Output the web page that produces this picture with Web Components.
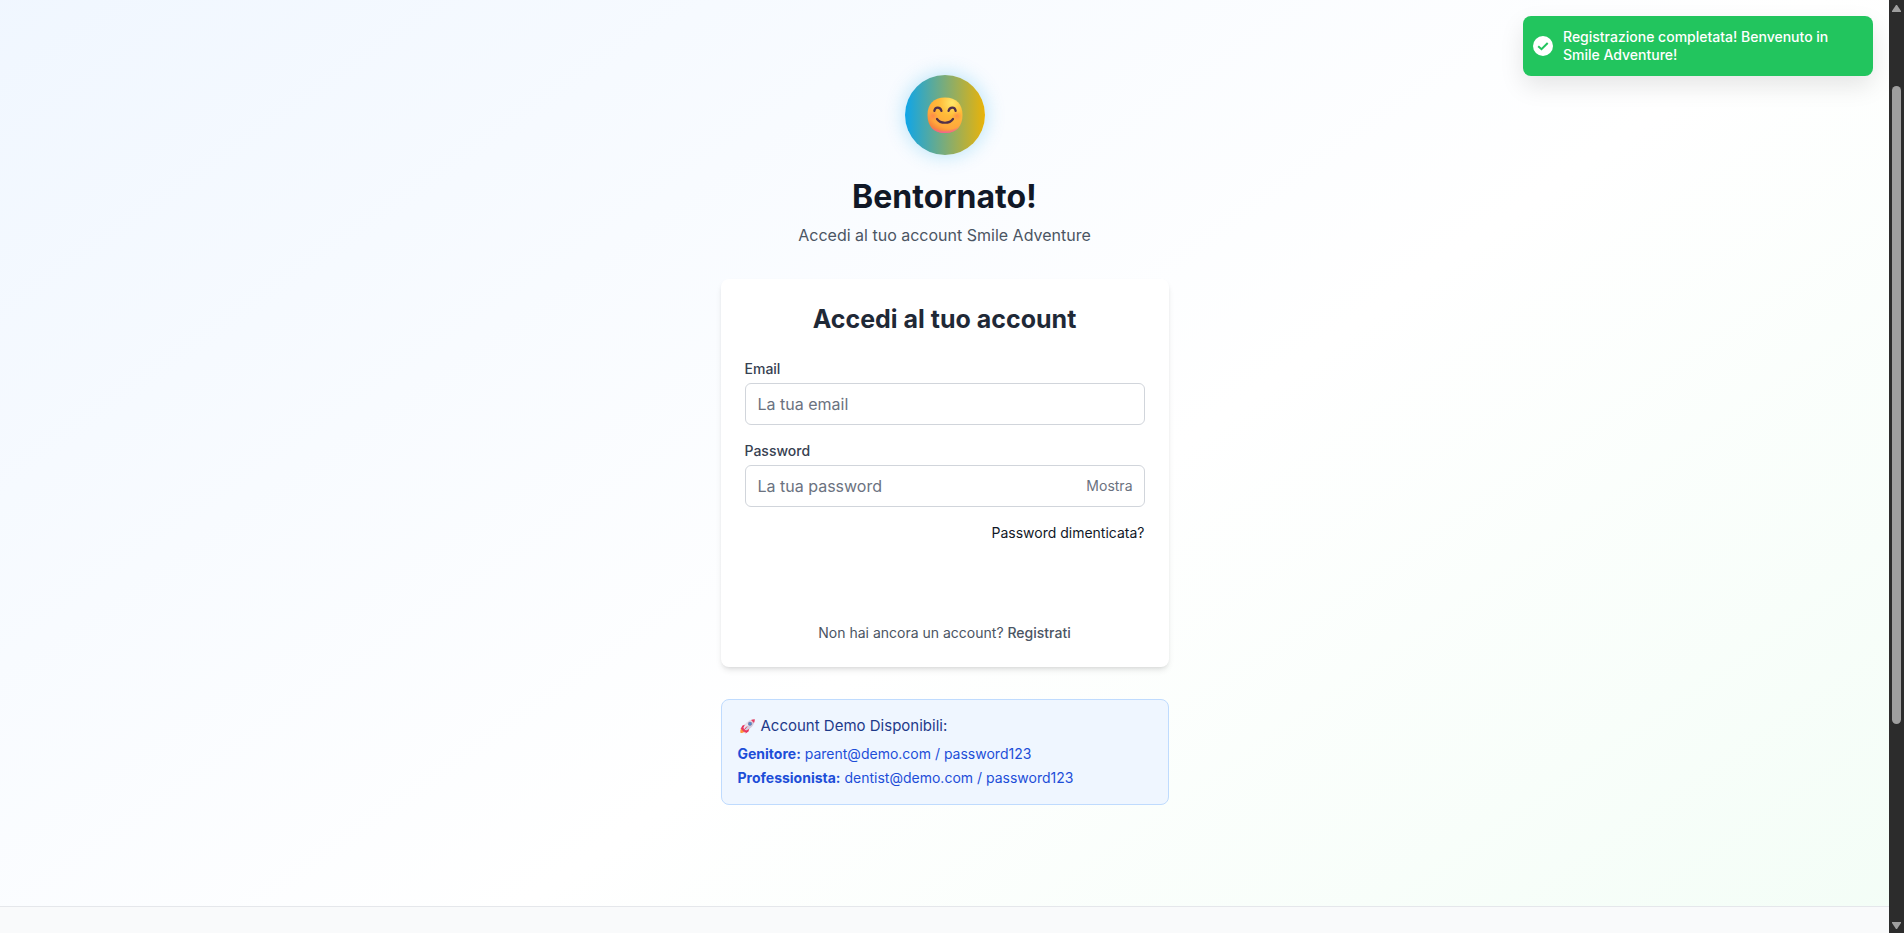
<!DOCTYPE html>
<html lang="it">
<head>
<meta charset="utf-8">
<meta name="viewport" content="width=device-width, initial-scale=1">
<title>Smile Adventure - Accedi</title>
<style>
body { margin: 0; font-family: Inter, "Liberation Sans", sans-serif; color: #111827; }
</style>
</head>
<body>
<smile-app></smile-app>

<template id="t-app">
<style>
:host { display: grid; grid-template-columns: 1fr 15px; min-height: 100vh; }
.page { position: relative; display: flex; flex-direction: column; min-width: 0; }
main {
  display: flex; flex-direction: column; align-items: center;
  padding: 75px 16px 101px;
  background: linear-gradient(to bottom right, #eff6ff, #ffffff 52%, #f0fdf4) 0 -102px / 100% calc(100% + 412px) no-repeat;
}
.column { width: 100%; max-width: 448px; display: flex; flex-direction: column; gap: 32px; }
footer { flex: 1; background: #f9fafb; border-top: 1px solid #e5e7eb; }
toast-message { position: absolute; top: 16px; right: 16px; }
</style>
<div class="page">
  <main>
    <div class="column">
      <welcome-header>
        <span slot="title">Bentornato!</span>
        <span slot="subtitle">Accedi al tuo account Smile Adventure</span>
      </welcome-header>
      <login-card></login-card>
      <demo-accounts></demo-accounts>
    </div>
  </main>
  <footer></footer>
  <toast-message>Registrazione completata! Benvenuto in Smile Adventure!</toast-message>
</div>
<scroll-rail></scroll-rail>
</template>

<template id="t-header">
<style>
:host { display: flex; flex-direction: column; align-items: center; text-align: center; }
.logo {
  width: 80px; height: 80px; border-radius: 50%; margin-bottom: 24px;
  display: flex; align-items: center; justify-content: center;
  background: linear-gradient(to right, #0ea5e9, #eab308);
  box-shadow: 0 0 20px rgba(14, 165, 233, .3);
}
svg { width: 36px; height: 36px; display: block; }
h1 { margin: 0 0 8px; font-size: 32px; line-height: 36px; font-weight: 700; color: #111827; }
p { margin: 0; font-size: 16px; line-height: 24px; color: #4b5563; }
</style>
<div class="logo">
  <svg viewBox="0 0 36 36" role="img" aria-label="Sorriso">
    <defs>
      <radialGradient id="face" cx="25" cy="6" r="32" gradientUnits="userSpaceOnUse">
        <stop offset="0" stop-color="#ffe768"/><stop offset=".4" stop-color="#ffbb38"/><stop offset=".8" stop-color="#ffa63c"/><stop offset="1" stop-color="#f47c3c"/>
      </radialGradient>
      <radialGradient id="base" cx="18" cy="6" r="30" gradientUnits="userSpaceOnUse">
        <stop offset=".9" stop-color="#f4649a" stop-opacity="0"/><stop offset="1" stop-color="#f0609f"/>
      </radialGradient>
      <radialGradient id="cheek"><stop offset="0" stop-color="#ff6a58" stop-opacity=".5"/><stop offset="1" stop-color="#ff6a58" stop-opacity="0"/></radialGradient>
    </defs>
    <path d="M18 .5C29.500 .5 35.500 7 35.500 18S29.500 36 18 36 .5 29 .5 18 6.500 .5 18 .5Z" fill="url(#face)"/>
    <path d="M18 .5C29.500 .5 35.500 7 35.500 18S29.500 36 18 36 .5 29 .5 18 6.500 .5 18 .5Z" fill="url(#base)"/>
    <circle cx="6" cy="19" r="5" fill="url(#cheek)"/><circle cx="30" cy="19" r="5" fill="url(#cheek)"/>
    <g fill="none" stroke="#533049" stroke-width="2.200" stroke-linecap="round">
      <path d="M7.300 14C8 9.500 13.300 9.500 14.500 14M21.500 14C22.700 9.500 28 9.500 28.700 14"/>
      <path d="M10 22C13.500 27 22.500 27 26 22"/>
    </g>
  </svg>
</div>
<h1><slot name="title"></slot></h1>
<p><slot name="subtitle"></slot></p>
</template>

<template id="t-card">
<style>
:host {
  display: block; padding: 24px; border-radius: 8px; background: #fff;
  box-shadow: 0 4px 6px -1px rgba(0, 0, 0, .1), 0 2px 4px -2px rgba(0, 0, 0, .1);
}
h2 { margin: 0 0 24px; font-size: 25px; line-height: 32px; font-weight: 700; text-align: center; color: #1f2937; }
form { display: flex; flex-direction: column; gap: 16px; }
a { text-decoration: none; color: inherit; }
.forgot { align-self: flex-end; font-size: 14px; line-height: 20px; color: #111827; }
.submit { height: 40px; border: 0; border-radius: 8px; background: #fff; }
p { margin: 24px 0 0; font-size: 14px; line-height: 20px; text-align: center; color: #4b5563; }
p a { font-weight: 500; }
</style>
<h2>Accedi al tuo account</h2>
<form>
  <form-field label="Email" type="email" placeholder="La tua email"></form-field>
  <form-field label="Password" type="password" placeholder="La tua password" toggle="Mostra"></form-field>
  <a class="forgot" href="#recupero">Password dimenticata?</a>
  <button class="submit" type="submit" aria-label="Accedi"></button>
</form>
<p>Non hai ancora un account? <a href="#registrati">Registrati</a></p>
</template>

<template id="t-field">
<style>
:host { display: block; }
label { display: block; margin-bottom: 4px; font-size: 14px; line-height: 20px; font-weight: 500; color: #374151; }
.box { display: flex; align-items: center; height: 40px; border: 1px solid #d1d5db; border-radius: 6px; background: #fff; padding: 0 11px 0 12px; gap: 12px; }
.box:focus-within { border-color: #0ea5e9; }
input { flex: 1; min-width: 0; height: 24px; padding: 0; border: 0; outline: 0; background: none; font: 16px/24px Inter, "Liberation Sans", sans-serif; color: #111827; }
input::placeholder { color: #6b7280; opacity: 1; }
button { padding: 0; border: 0; background: none; font: 14px/20px Inter, "Liberation Sans", sans-serif; color: #6b7280; cursor: pointer; }
</style>
<label for="control"></label>
<div class="box"><input id="control"></div>
</template>

<template id="t-demo">
<style>
:host { display: block; padding: 16px; border: 1px solid #bfdbfe; border-radius: 8px; background: #eff6ff; font-size: 14px; line-height: 20px; color: #1d4ed8; }
h3 { display: flex; align-items: center; gap: 5px; margin: 0 0 8px; font-size: 15px; line-height: 20px; font-weight: 400; color: #1e3a8a; }
svg { width: 18px; height: 16px; }
p { margin: 0; }
p + p { margin-top: 4px; }
strong { font-weight: 700; }
</style>
<h3>
  <svg viewBox="-1 0 18 16" aria-hidden="true">
    <path d="M2.500 10.500C1 11.500 1.300 13.500 1.500 15 3.500 15 5.300 14.500 6 13Z" fill="#ff9838"/>
    <path d="M6.500 6.500 3.500 7.500 1.500 11 5.500 10.500ZM10.500 10 9.500 13.500 6.500 15.500 6.500 11.500Z" fill="#e8345c"/>
    <path d="M4.500 10C6 5 10 1.700 15.700 1.300 15.500 7 12 11 7 12.500Z" fill="#d3cbdc"/>
    <path d="M4.500 10C6.500 5 10 2 14.500 1.400L5.700 11.300Z" fill="#e9e3ee"/>
    <path d="M12 1.900C13.300 1.400 14.500 1.200 15.800 1.200 15.800 2.600 15.500 3.800 15 5Z" fill="#e93e62"/>
    <circle cx="11" cy="5.700" r="1.700" fill="#4f8fd0" stroke="#7b6c93" stroke-width=".6"/>
    <path d="M3.500 10 7 13.300 5.500 13.800 3 11.500ZM8 8.500 5.500 11.500" fill="#f0356c" stroke="#e8345c" stroke-width="1"/>
  </svg>
  <span>Account Demo Disponibili:</span>
</h3>
<p><strong>Genitore:</strong> parent@demo.com / password123</p>
<p><strong>Professionista:</strong> dentist@demo.com / password123</p>
</template>

<template id="t-toast">
<style>
:host {
  display: flex; align-items: center; gap: 10px; box-sizing: border-box; width: 350px; min-height: 60px; padding: 12px 10px;
  border-radius: 8px; background: #22c55e; color: #fff; font-size: 14px; line-height: 18px; font-weight: 500;
  box-shadow: 0 10px 25px rgba(0, 0, 0, .1);
}
svg { flex: none; width: 20px; height: 20px; }
div { flex: 1; padding-right: 20px; }
</style>
<svg viewBox="0 0 20 20" aria-hidden="true"><circle cx="10" cy="10" r="10" fill="#fff"/><path d="M5.200 10.200 8.500 13.200 14.700 7" fill="none" stroke="#22c55e" stroke-width="2"/></svg>
<div role="status"><slot></slot></div>
</template>

<template id="t-rail">
<style>
:host { display: flex; flex-direction: column; align-items: center; justify-content: space-between; position: sticky; top: 0; height: 100vh; background: #2c2c2c; box-sizing: border-box; padding: 5px 0 4px; }
svg { flex: none; width: 9px; height: 7px; }
.track { flex: 1; display: flex; flex-direction: column; align-items: center; width: 100%; }
.before { flex: 74; }
.thumb { flex: 638; width: 9px; border-radius: 5px; background: #9f9f9f; }
.after { flex: 198; }
</style>
<svg viewBox="0 0 9 7" aria-hidden="true"><path d="M4 0H5L9 6V7H0V6Z" fill="#9f9f9f"/></svg>
<div class="track"><div class="before"></div><div class="thumb"></div><div class="after"></div></div>
<svg viewBox="0 0 9 7" aria-hidden="true"><path d="M0 0H9V1L5 7H4L0 1Z" fill="#9f9f9f"/></svg>
</template>

<script>
class TemplateElement extends HTMLElement {
  constructor() {
    super();
    this.attachShadow({ mode: "open" })
      .append(document.getElementById(this.constructor.template).content.cloneNode(true));
  }
}

class WelcomeHeader extends TemplateElement { static template = "t-header"; }
class DemoAccounts extends TemplateElement { static template = "t-demo"; }
class ToastMessage extends TemplateElement { static template = "t-toast"; }
class ScrollRail extends TemplateElement { static template = "t-rail"; }
class SmileApp extends TemplateElement { static template = "t-app"; }

class LoginCard extends TemplateElement {
  static template = "t-card";
  connectedCallback() {
    this.shadowRoot.querySelector("form").addEventListener("submit", e => e.preventDefault());
  }
}

class FormField extends TemplateElement {
  static template = "t-field";
  connectedCallback() {
    const root = this.shadowRoot;
    const input = root.querySelector("input");
    root.querySelector("label").textContent = this.getAttribute("label");
    input.type = this.getAttribute("type");
    input.placeholder = this.getAttribute("placeholder");
    if (this.hasAttribute("toggle") && !root.querySelector("button")) {
      const button = document.createElement("button");
      button.type = "button";
      button.textContent = this.getAttribute("toggle");
      button.addEventListener("click", () => {
        const hidden = input.type === "password";
        input.type = hidden ? "text" : "password";
        button.textContent = hidden ? "Nascondi" : "Mostra";
      });
      root.querySelector(".box").append(button);
    }
  }
}

customElements.define("form-field", FormField);
customElements.define("welcome-header", WelcomeHeader);
customElements.define("login-card", LoginCard);
customElements.define("demo-accounts", DemoAccounts);
customElements.define("toast-message", ToastMessage);
customElements.define("scroll-rail", ScrollRail);
customElements.define("smile-app", SmileApp);
</script>
</body>
</html>
